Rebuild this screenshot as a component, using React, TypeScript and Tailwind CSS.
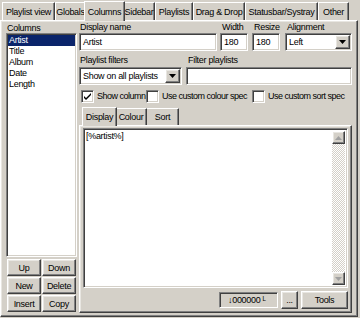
const raised =
  "border border-t-white border-l-white border-r-[#404040] border-b-[#404040] shadow-[inset_-1px_-1px_0_#808080,inset_1px_1px_0_#e8e6e1]";
const sunken =
  "border border-t-[#808080] border-l-[#808080] border-r-white border-b-white shadow-[inset_1px_1px_0_#404040,inset_-1px_-1px_0_#d4d0c8]";

const tabs = [
  { label: "Playlist view", w: "w-[53px]" },
  { label: "Globals", w: "w-[31px]" },
  { label: "Columns", w: "w-[41px]", active: true },
  { label: "Sidebar", w: "w-[32px]" },
  { label: "Playlists", w: "w-[38px]" },
  { label: "Drag & Drop", w: "w-[52px]" },
  { label: "Statusbar/Systray", w: "w-[73px]" },
  { label: "Other", w: "w-[31px]" },
];

function Arrow({ up = false, disabled = false }: { up?: boolean; disabled?: boolean }) {
  return (
    <svg width="7" height="4" viewBox="0 0 7 4">
      <polygon
        points={up ? "0,4 7,4 3.5,0" : "0,0 7,0 3.5,4"}
        fill={disabled ? "#a0a0a0" : "#000"}
      />
    </svg>
  );
}

function Combo({ value, className }: { value: string; className: string }) {
  return (
    <div className={`${sunken} bg-white flex items-center ${className}`}>
      <span className="flex-1 pl-[3px] whitespace-nowrap overflow-hidden">{value}</span>
      <div className={`${raised} bg-[#d4d0c8] w-[15px] h-[14px] mr-[1px] flex items-center justify-center shrink-0`}>
        <Arrow />
      </div>
    </div>
  );
}

function Check({ checked, label }: { checked?: boolean; label: string }) {
  return (
    <div className="flex items-center gap-[3px] whitespace-nowrap">
      <div className={`${sunken} bg-white w-[13px] h-[13px] flex items-center justify-center shrink-0`}>
        {checked && (
          <svg width="7" height="7" viewBox="0 0 7 7">
            <path d="M0 3 L2 5 L7 0 L7 2 L2 7 L0 5 Z" fill="#000" />
          </svg>
        )}
      </div>
      <span className="tracking-[-0.5px]">{label}</span>
    </div>
  );
}

function Btn({ label, className = "" }: { label: string; className?: string }) {
  return (
    <div className={`${raised} bg-[#d4d0c8] flex items-center justify-center whitespace-nowrap ${className}`}>{label}</div>
  );
}

export default function App() {
  const columns = ["Artist", "Title", "Album", "Date", "Length"];
  return (
    <div
      className="w-[360px] h-[318px] bg-[#d4d0c8] text-[9px] tracking-[-0.3px] leading-[12px] text-black overflow-hidden relative"
      style={{ fontFamily: '"Liberation Sans", Arial, sans-serif' }}
    >
      {/* tab strip */}
      <div className="flex items-end h-[20px] pl-[2px]">
        {tabs.map((t) =>
          t.active ? (
            <div
              key={t.label}
              className={`${t.w} shrink-0 h-[20px] -mx-[2px] px-[2px] bg-[#d4d0c8] border-t border-l border-t-white border-l-white border-r border-r-[#404040] shadow-[inset_-1px_0_0_#808080] flex items-center justify-center whitespace-nowrap relative z-10 -mb-[1px]`}
            >
              {t.label}
            </div>
          ) : (
            <div
              key={t.label}
              className={`${t.w} shrink-0 h-[18px] border-t border-l border-t-white border-l-white border-r border-r-[#404040] shadow-[inset_-1px_0_0_#808080] flex items-center justify-center whitespace-nowrap`}
            >
              {t.label}
            </div>
          )
        )}
      </div>

      {/* page */}
      <div className={`${raised} w-[358px] h-[297px] flex px-[5px] pt-[2px] pb-[3px] gap-[2px]`}>
        {/* left column */}
        <div className="w-[71px] shrink-0 flex flex-col">
          <div className="h-[10px] leading-[10px] pl-[1px]">Columns</div>
          <div className={`${sunken} bg-white h-[224px] p-[1px]`}>
            {columns.map((c, i) => (
              <div
                key={c}
                className={`h-[11px] leading-[11px] pl-[1px] ${i === 0 ? "bg-[#0a246a] text-white" : ""}`}
              >
                {c}
              </div>
            ))}
          </div>
          <div className="grid grid-cols-2 gap-x-[1px] gap-y-[1px] mt-[2px] px-[1px]">
            <Btn label="Up" className="h-[17px]" />
            <Btn label="Down" className="h-[17px]" />
            <Btn label="New" className="h-[17px]" />
            <Btn label="Delete" className="h-[17px]" />
            <Btn label="Insert" className="h-[17px]" />
            <Btn label="Copy" className="h-[17px]" />
          </div>
        </div>

        {/* right column */}
        <div className="flex-1 min-w-0 flex flex-col">
          <div className="flex gap-[3px] items-end">
            <div className="flex flex-col w-[138px]">
              <span className="pl-[1px] h-[10px] leading-[10px] -mt-[1px] mb-[1px]">Display name</span>
              <div className={`${sunken} bg-white h-[18px] flex items-center pl-[3px]`}>Artist</div>
            </div>
            <div className="flex flex-col w-[28px]">
              <span className="pl-[2px] h-[10px] leading-[10px] -mt-[1px] mb-[1px]">Width</span>
              <div className={`${sunken} bg-white h-[18px] flex items-center pl-[3px]`}>180</div>
            </div>
            <div className="flex flex-col w-[28px] ml-[1px]">
              <span className="pl-[2px] h-[10px] leading-[10px] -mt-[1px] mb-[1px]">Resize</span>
              <div className={`${sunken} bg-white h-[18px] flex items-center pl-[3px]`}>180</div>
            </div>
            <div className="flex flex-col flex-1 ml-[2px]">
              <span className="pl-[2px] h-[10px] leading-[10px] -mt-[1px] mb-[1px]">Alignment</span>
              <Combo value="Left" className="h-[18px]" />
            </div>
          </div>

          <div className="flex gap-[3px] mt-[4px]">
            <div className="flex flex-col w-[103px] shrink-0">
              <span className="pl-[1px] h-[10px] leading-[10px] mb-[2px]">Playlist filters</span>
              <Combo value="Show on all playlists" className="h-[18px]" />
            </div>
            <div className="flex flex-col flex-1 ml-[1px]">
              <span className="pl-[2px] h-[10px] leading-[10px] mb-[2px]">Filter playlists</span>
              <div className={`${sunken} bg-white h-[18px]`} />
            </div>
          </div>

          <div className="flex mt-[4px] pl-[2px] h-[14px] items-center">
            <div className="w-[65px] shrink-0">
              <Check checked label="Show column" />
            </div>
            <div className="w-[106px] shrink-0">
              <Check label="Use custom colour spec" />
            </div>
            <Check label="Use custom sort spec" />
          </div>

          {/* inner tabs */}
          <div className="flex items-end h-[19px] mt-[3px] pl-[3px]">
            <div className="w-[35px] h-[19px] -mr-[1px] border-t border-l border-t-white border-l-white border-r border-r-[#404040] shadow-[inset_-1px_0_0_#808080] flex items-center justify-center relative z-10 -mb-[1px] bg-[#d4d0c8]">
              Display
            </div>
            <div className="w-[31px] h-[17px] border-t border-r border-t-white border-r-[#404040] shadow-[inset_-1px_0_0_#808080] flex items-center justify-center">
              Colour
            </div>
            <div className="w-[32px] h-[17px] border-t border-r border-t-white border-r-[#404040] shadow-[inset_-1px_0_0_#808080] flex items-center justify-center">
              Sort
            </div>
          </div>
          <div className={`${raised} flex-1 flex flex-col p-[3px] pt-[2px] pb-[3px]`}>
            <div className={`${sunken} bg-white flex-1 flex`}>
              <div className="flex-1 pl-[2px] pt-[2px] text-[9px] leading-[11px]">[%artist%]</div>
              <div className="w-[13px] flex flex-col my-[2px] mr-[2px]">
                <div className={`${raised} bg-[#d4d0c8] h-[13px] flex items-center justify-center`}>
                  <Arrow up disabled />
                </div>
                <div className="flex-1 bg-[repeating-conic-gradient(#d4d0c8_0_25%,#ffffff_0_50%)] bg-[length:2px_2px]" />
                <div className={`${raised} bg-[#d4d0c8] h-[13px] flex items-center justify-center`}>
                  <Arrow disabled />
                </div>
              </div>
            </div>
            <div className="flex justify-end items-center gap-[3px] mt-[3px] h-[18px]">
              <div className={`${sunken} w-[59px] h-[16px] flex items-center pl-[8px] whitespace-nowrap`}>
                ↓000000 ᴸ
              </div>
              <Btn label="..." className="w-[17px] h-[18px]" />
              <Btn label="Tools" className="w-[47px] h-[18px]" />
            </div>
          </div>
        </div>
      </div>
    </div>
  );
}
